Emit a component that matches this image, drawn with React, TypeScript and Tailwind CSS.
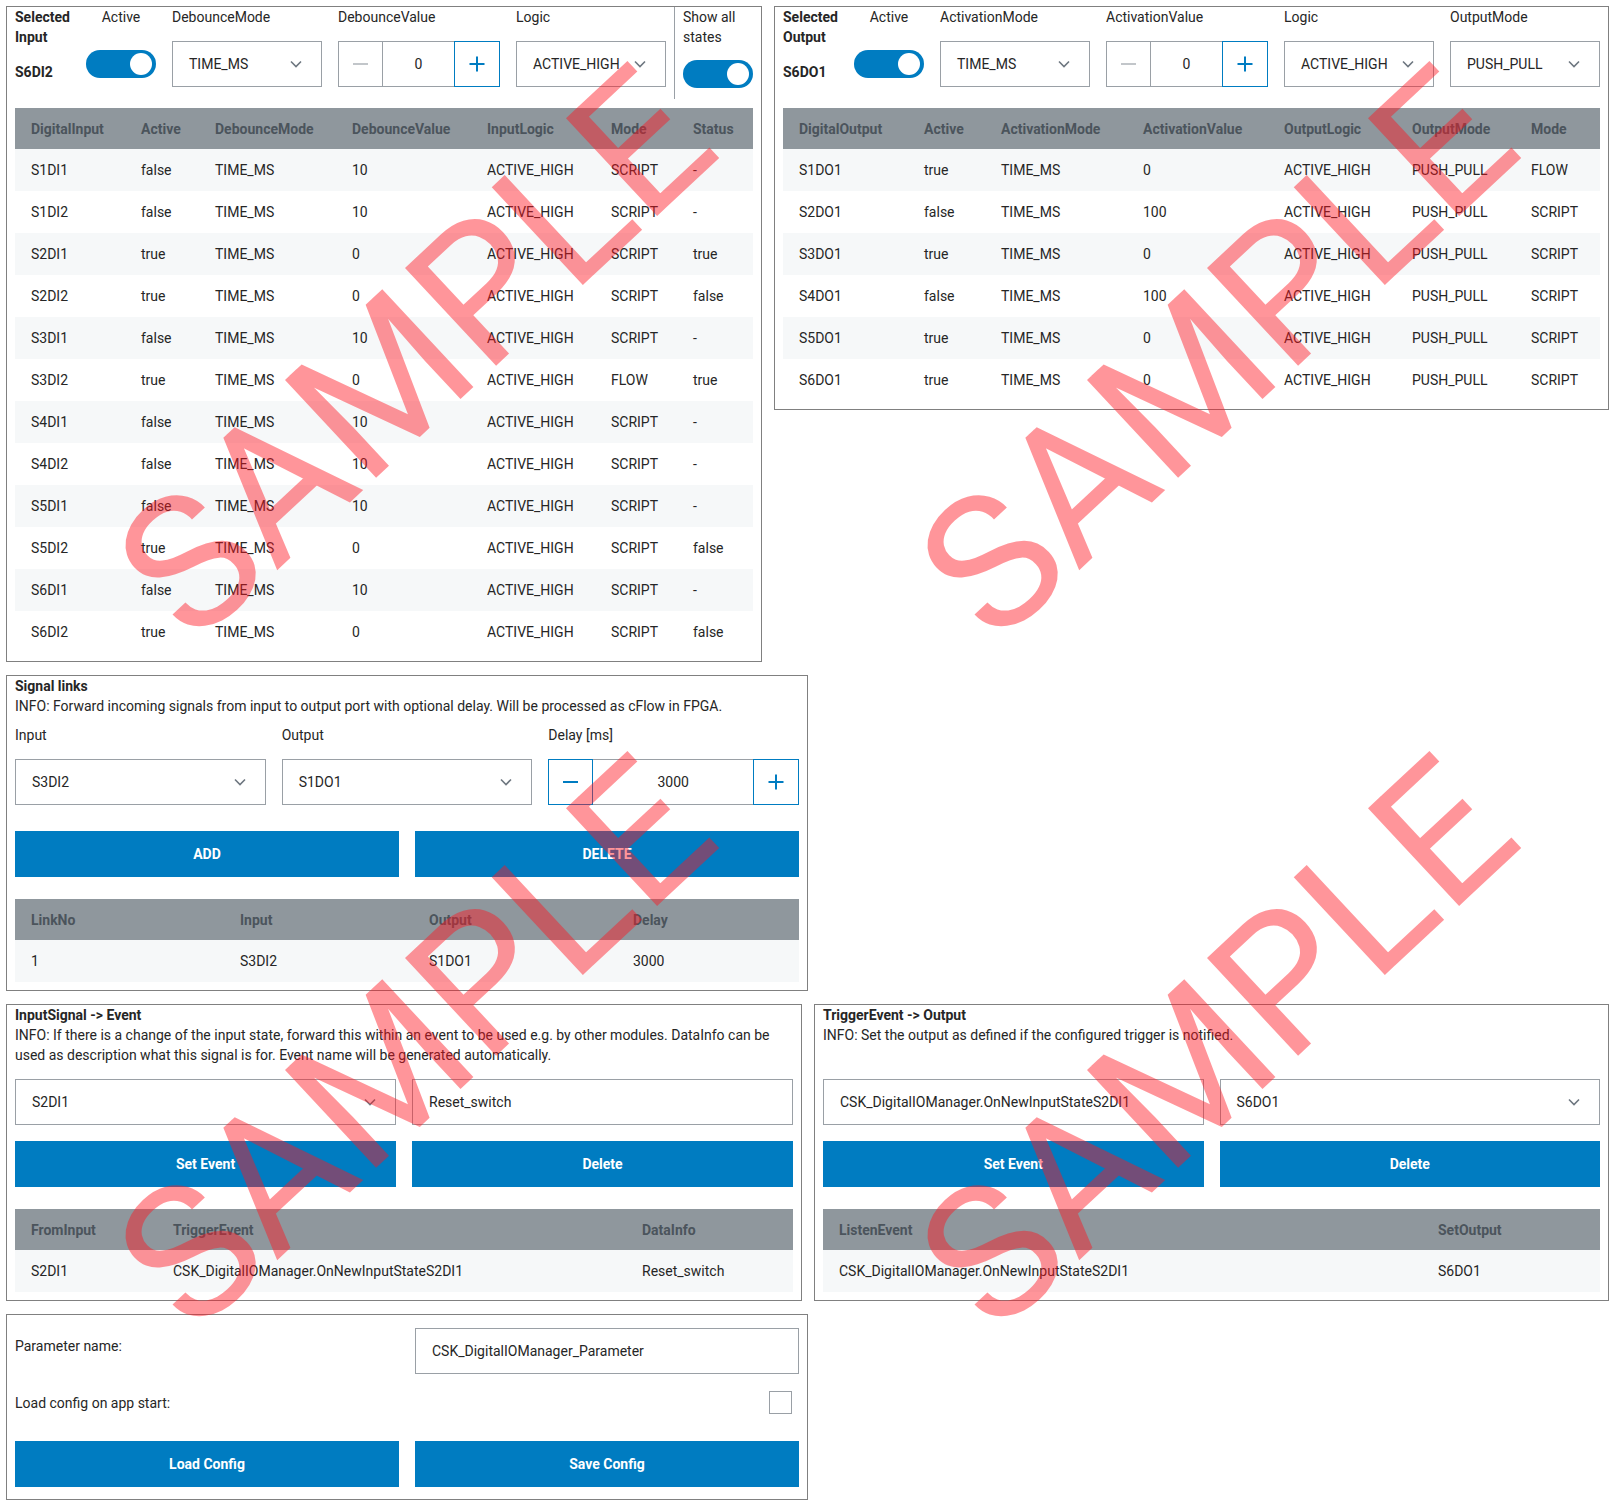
import React from 'react'

type Row = string[]

const inputRows: Row[] = [
  ['S1DI1', 'false', 'TIME_MS', '10', 'ACTIVE_HIGH', 'SCRIPT', '-'],
  ['S1DI2', 'false', 'TIME_MS', '10', 'ACTIVE_HIGH', 'SCRIPT', '-'],
  ['S2DI1', 'true', 'TIME_MS', '0', 'ACTIVE_HIGH', 'SCRIPT', 'true'],
  ['S2DI2', 'true', 'TIME_MS', '0', 'ACTIVE_HIGH', 'SCRIPT', 'false'],
  ['S3DI1', 'false', 'TIME_MS', '10', 'ACTIVE_HIGH', 'SCRIPT', '-'],
  ['S3DI2', 'true', 'TIME_MS', '0', 'ACTIVE_HIGH', 'FLOW', 'true'],
  ['S4DI1', 'false', 'TIME_MS', '10', 'ACTIVE_HIGH', 'SCRIPT', '-'],
  ['S4DI2', 'false', 'TIME_MS', '10', 'ACTIVE_HIGH', 'SCRIPT', '-'],
  ['S5DI1', 'false', 'TIME_MS', '10', 'ACTIVE_HIGH', 'SCRIPT', '-'],
  ['S5DI2', 'true', 'TIME_MS', '0', 'ACTIVE_HIGH', 'SCRIPT', 'false'],
  ['S6DI1', 'false', 'TIME_MS', '10', 'ACTIVE_HIGH', 'SCRIPT', '-'],
  ['S6DI2', 'true', 'TIME_MS', '0', 'ACTIVE_HIGH', 'SCRIPT', 'false'],
]

const outputRows: Row[] = [
  ['S1DO1', 'true', 'TIME_MS', '0', 'ACTIVE_HIGH', 'PUSH_PULL', 'FLOW'],
  ['S2DO1', 'false', 'TIME_MS', '100', 'ACTIVE_HIGH', 'PUSH_PULL', 'SCRIPT'],
  ['S3DO1', 'true', 'TIME_MS', '0', 'ACTIVE_HIGH', 'PUSH_PULL', 'SCRIPT'],
  ['S4DO1', 'false', 'TIME_MS', '100', 'ACTIVE_HIGH', 'PUSH_PULL', 'SCRIPT'],
  ['S5DO1', 'true', 'TIME_MS', '0', 'ACTIVE_HIGH', 'PUSH_PULL', 'SCRIPT'],
  ['S6DO1', 'true', 'TIME_MS', '0', 'ACTIVE_HIGH', 'PUSH_PULL', 'SCRIPT'],
]

function Toggle() {
  return (
    <div className="flex h-[28px] w-[70px] items-center justify-end rounded-full bg-[#007cc1] pr-[4px]">
      <div className="h-[22px] w-[22px] rounded-full bg-white" />
    </div>
  )
}

function Chevron() {
  return (
    <svg width="12" height="8" viewBox="0 0 12 8" className="shrink-0">
      <path d="M1 1.5 L6 6.5 L11 1.5" fill="none" stroke="#6e7780" strokeWidth="1.6" />
    </svg>
  )
}

function Select({ value, className = '' }: { value: string; className?: string }) {
  return (
    <div className={`flex h-[46px] items-center justify-between border border-[#9aa0a6] bg-white pl-4 pr-[19px] ${className}`}>
      <span>{value}</span>
      <Chevron />
    </div>
  )
}

function TextField({ value, className = '' }: { value: string; className?: string }) {
  return (
    <div className={`flex h-[46px] items-center border border-[#9aa0a6] bg-white pl-4 ${className}`}>
      {value}
    </div>
  )
}

function NumberInput({ value, minusActive = false, className = '' }: { value: string; minusActive?: boolean; className?: string }) {
  return (
    <div className={`flex h-[46px] ${className}`}>
      <div className={`flex w-[45px] items-center justify-center border ${minusActive ? 'border-[#007cc1]' : 'border-[#9aa0a6]'}`}>
        <div className={`h-[1.5px] w-[15px] ${minusActive ? 'bg-[#007cc1]' : 'bg-[#c2c6ca]'}`} />
      </div>
      <div className="flex flex-1 items-center justify-center border-y border-[#9aa0a6]">{value}</div>
      <div className="flex w-[46px] items-center justify-center border border-[#007cc1]">
        <svg width="16" height="16" viewBox="0 0 16 16">
          <path d="M8 0.5 V15.5 M0.5 8 H15.5" stroke="#007cc1" strokeWidth="2" fill="none" />
        </svg>
      </div>
    </div>
  )
}

function Button({ label }: { label: string }) {
  return (
    <div className="flex h-[46px] items-center justify-center bg-[#007cc1] font-bold text-white">{label}</div>
  )
}

function Table({ grid, headers, rows }: { grid: string; headers: string[]; rows: Row[] }) {
  return (
    <div>
      <div className={`grid h-[41px] items-center bg-[#8f979d] font-bold text-[#4b545c] ${grid}`}>
        {headers.map((h) => (
          <div key={h} className="pl-4 whitespace-nowrap">{h}</div>
        ))}
      </div>
      {rows.map((r, i) => (
        <div key={i} className={`grid h-[42px] items-center ${grid} ${i % 2 === 0 ? 'bg-[#f6f8f9]' : 'bg-white'}`}>
          {r.map((c, j) => (
            <div key={j} className="pl-4 whitespace-nowrap">{c}</div>
          ))}
        </div>
      ))}
    </div>
  )
}

function Label({ children }: { children: React.ReactNode }) {
  return <div className="leading-5 whitespace-nowrap">{children}</div>
}

function Watermark({ className }: { className: string }) {
  return (
    <div
      className={`pointer-events-none absolute -translate-x-1/2 -translate-y-1/2 -rotate-[43deg] text-[188px] font-normal leading-none whitespace-nowrap text-[rgba(255,20,30,0.45)] ${className}`}
    >
      SAMPLE
    </div>
  )
}

export default function App() {
  return (
    <div className="relative min-h-[1507px] w-[1615px] overflow-hidden bg-white p-[6px] text-[14px] leading-5 text-[#262626] [font-family:Roboto,'Liberation_Sans',sans-serif]">
      {/* inputs + outputs */}
      <div className="flex items-start gap-3">
        <div className="w-[756px] border border-[#808080] px-2 pb-2">
          <div className="flex h-[92px]">
            <div className="w-[71px]">
              <div className="font-bold leading-5">Selected Input</div>
              <div className="mt-[15px] font-bold leading-5">S6DI2</div>
            </div>
            <div className="flex w-[70px] flex-col items-center">
              <Label>Active</Label>
              <div className="mt-[23px]">
                <Toggle />
              </div>
            </div>
            <div className="ml-4 w-[150px]">
              <Label>DebounceMode</Label>
              <Select className="mt-[14px]" value="TIME_MS" />
            </div>
            <div className="ml-4 w-[162px]">
              <Label>DebounceValue</Label>
              <NumberInput className="mt-[14px]" value="0" />
            </div>
            <div className="ml-4 w-[150px]">
              <Label>Logic</Label>
              <Select className="mt-[14px]" value="ACTIVE_HIGH" />
            </div>
            <div className="ml-2 w-[79px] border-l border-[#9aa0a6] pl-2">
              <div className="leading-5">Show all states</div>
              <div className="mt-[13px]">
                <Toggle />
              </div>
            </div>
          </div>
          <div className="mt-[9px]">
            <Table
              grid="grid-cols-[110px_74px_137px_135px_124px_82px_76px]"
              headers={['DigitalInput', 'Active', 'DebounceMode', 'DebounceValue', 'InputLogic', 'Mode', 'Status']}
              rows={inputRows}
            />
          </div>
        </div>

        <div className="w-[835px] border border-[#808080] px-2 pb-2">
          <div className="flex h-[92px]">
            <div className="w-[71px]">
              <div className="font-bold leading-5">Selected Output</div>
              <div className="mt-[15px] font-bold leading-5">S6DO1</div>
            </div>
            <div className="flex w-[70px] flex-col items-center">
              <Label>Active</Label>
              <div className="mt-[23px]">
                <Toggle />
              </div>
            </div>
            <div className="ml-4 w-[150px]">
              <Label>ActivationMode</Label>
              <Select className="mt-[14px]" value="TIME_MS" />
            </div>
            <div className="ml-4 w-[162px]">
              <Label>ActivationValue</Label>
              <NumberInput className="mt-[14px]" value="0" />
            </div>
            <div className="ml-4 w-[150px]">
              <Label>Logic</Label>
              <Select className="mt-[14px]" value="ACTIVE_HIGH" />
            </div>
            <div className="ml-4 w-[150px]">
              <Label>OutputMode</Label>
              <Select className="mt-[14px]" value="PUSH_PULL" />
            </div>
          </div>
          <div className="mt-[9px]">
            <Table
              grid="grid-cols-[125px_77px_142px_141px_128px_119px_85px]"
              headers={['DigitalOutput', 'Active', 'ActivationMode', 'ActivationValue', 'OutputLogic', 'OutputMode', 'Mode']}
              rows={outputRows}
            />
          </div>
        </div>
      </div>

      {/* signal links */}
      <div className="mt-[13px] w-[802px] border border-[#808080] px-2 pb-2">
        <div className="font-bold leading-5">Signal links</div>
        <div className="leading-5">INFO: Forward incoming signals from input to output port with optional delay. Will be processed as cFlow in FPGA.</div>
        <div className="mt-[9px] grid grid-cols-3 gap-4">
          <div>
            <Label>Input</Label>
            <Select className="mt-[14px]" value="S3DI2" />
          </div>
          <div>
            <Label>Output</Label>
            <Select className="mt-[14px]" value="S1DO1" />
          </div>
          <div>
            <Label>Delay [ms]</Label>
            <NumberInput className="mt-[14px]" value="3000" minusActive />
          </div>
        </div>
        <div className="mt-[26px] grid grid-cols-2 gap-4">
          <Button label="ADD" />
          <Button label="DELETE" />
        </div>
        <div className="mt-[22px]">
          <Table
            grid="grid-cols-[209px_189px_204px_182px]"
            headers={['LinkNo', 'Input', 'Output', 'Delay']}
            rows={[['1', 'S3DI2', 'S1DO1', '3000']]}
          />
        </div>
      </div>

      {/* events */}
      <div className="mt-[13px] flex items-start gap-3">
        <div className="w-[796px] border border-[#808080] px-2 pb-2">
          <div className="font-bold leading-5">InputSignal -&gt; Event</div>
          <div className="h-10 leading-5">
            INFO: If there is a change of the input state, forward this within an event to be used e.g. by other modules. DataInfo can be used as description what this signal is for. Event name will be generated automatically.
          </div>
          <div className="mt-[14px] grid grid-cols-2 gap-4">
            <Select value="S2DI1" />
            <TextField value="Reset_switch" />
          </div>
          <div className="mt-4 grid grid-cols-2 gap-4">
            <Button label="Set Event" />
            <Button label="Delete" />
          </div>
          <div className="mt-[22px]">
            <Table
              grid="grid-cols-[142px_469px_167px]"
              headers={['FromInput', 'TriggerEvent', 'DataInfo']}
              rows={[['S2DI1', 'CSK_DigitalIOManager.OnNewInputStateS2DI1', 'Reset_switch']]}
            />
          </div>
        </div>

        <div className="w-[795px] border border-[#808080] px-2 pb-2">
          <div className="font-bold leading-5">TriggerEvent -&gt; Output</div>
          <div className="h-10 leading-5">INFO: Set the output as defined if the configured trigger is notified.</div>
          <div className="mt-[14px] grid grid-cols-2 gap-4">
            <TextField value="CSK_DigitalIOManager.OnNewInputStateS2DI1" />
            <Select value="S6DO1" />
          </div>
          <div className="mt-4 grid grid-cols-2 gap-4">
            <Button label="Set Event" />
            <Button label="Delete" />
          </div>
          <div className="mt-[22px]">
            <Table
              grid="grid-cols-[599px_178px]"
              headers={['ListenEvent', 'SetOutput']}
              rows={[['CSK_DigitalIOManager.OnNewInputStateS2DI1', 'S6DO1']]}
            />
          </div>
        </div>
      </div>

      {/* parameters */}
      <div className="mt-[13px] w-[802px] border border-[#808080] px-2 pb-3">
        <div className="mt-[13px] grid grid-cols-2 gap-4">
          <div className="mt-2 leading-5">Parameter name:</div>
          <TextField value="CSK_DigitalIOManager_Parameter" />
        </div>
        <div className="mt-[17px] flex h-[23px] items-center justify-between">
          <div className="leading-5">Load config on app start:</div>
          <div className="mr-[7px] h-[23px] w-[23px] border border-[#9aa0a6] bg-white" />
        </div>
        <div className="mt-[27px] grid grid-cols-2 gap-4">
          <Button label="Load Config" />
          <Button label="Save Config" />
        </div>
      </div>

      <Watermark className="left-[415px] top-[354px]" />
      <Watermark className="left-[1217px] top-[354px]" />
      <Watermark className="left-[415px] top-[1044px]" />
      <Watermark className="left-[1217px] top-[1044px]" />
    </div>
  )
}
